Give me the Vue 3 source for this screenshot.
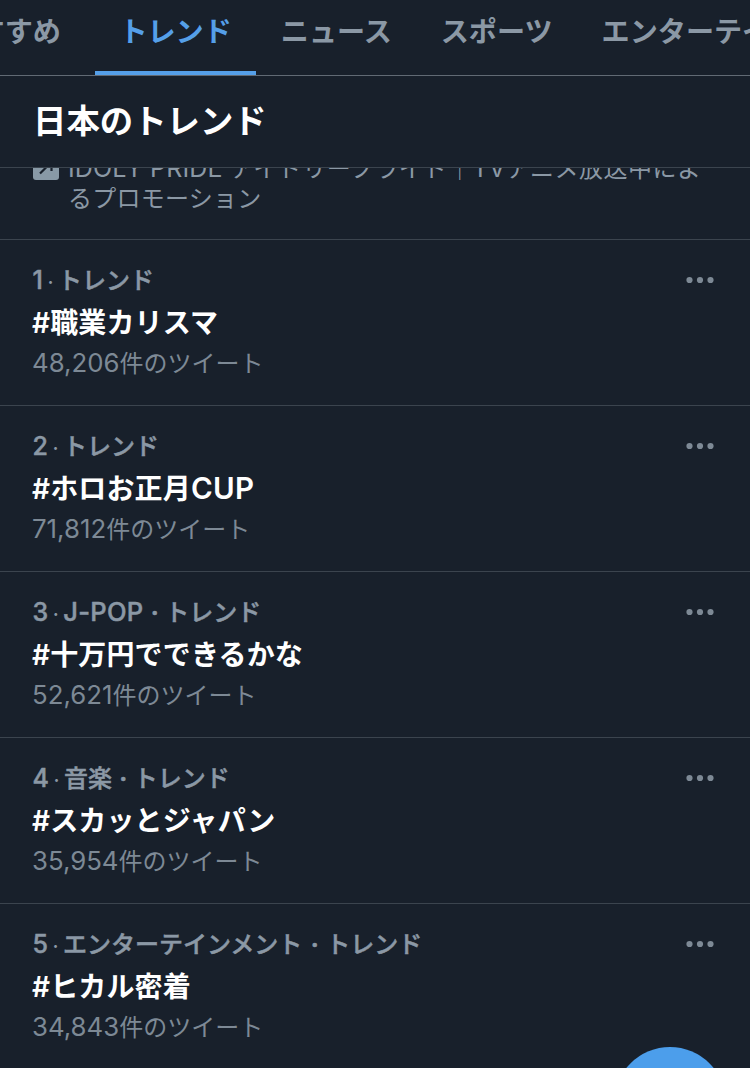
<script setup>
const tabs = [
  { label: 'おすすめ', active: false },
  { label: 'トレンド', active: true },
  { label: 'ニュース', active: false },
  { label: 'スポーツ', active: false },
  { label: 'エンターテインメント', active: false },
]

const trends = [
  { rank: 1, category: '', topic: '#職業カリスマ', count: '48,206' },
  { rank: 2, category: '', topic: '#ホロお正月', latin: 'CUP', count: '71,812' },
  { rank: 3, category: 'J-POP', wide: true, topic: '#十万円でできるかな', count: '52,621' },
  { rank: 4, category: '音楽', topic: '#スカッとジャパン', count: '35,954' },
  { rank: 5, category: 'エンターテインメント', topic: '#ヒカル密着', count: '34,843' },
]
</script>

<template>
  <main class="screen">
    <nav class="tabs">
      <a v-for="tab in tabs" :key="tab.label" class="tab" :class="{ active: tab.active }">{{ tab.label }}</a>
    </nav>
    <h1 class="title">日本のトレンド</h1>
    <section class="promo">
      <svg class="promo-icon" viewBox="0 0 26 26">
        <rect width="26" height="26" rx="3" fill="#8899a6" />
        <path d="M7 19.5 17.8 8.7M9.5 8h9v9" fill="none" stroke="#18202b" stroke-width="2.2" />
      </svg>
      <p class="promo-text">
        <span class="promo-line first"><span class="latin">IDOLY PRIDE</span> アイドリープライド｜<span class="latin">TV</span>アニメ放送中によ</span>
        <span class="promo-line second">るプロモーション</span>
      </p>
    </section>
    <article v-for="t in trends" :key="t.rank" class="trend">
      <div class="body">
        <div class="meta">
          <span class="rank">{{ t.rank }}</span><span class="dot">·</span><template v-if="t.category"><span :class="{ wide: t.wide }">{{ t.category }}</span><span class="sep">·</span></template><span>トレンド</span>
        </div>
        <div class="topic">{{ t.topic }}<span v-if="t.latin" class="topic-latin">{{ t.latin }}</span></div>
        <div class="count"><span class="number">{{ t.count }}</span>件のツイート</div>
      </div>
      <svg class="more" viewBox="0 0 30 8">
        <circle cx="4.5" cy="4" r="3.1" /><circle cx="15" cy="4" r="3.1" /><circle cx="25.5" cy="4" r="3.1" />
      </svg>
    </article>
    <div class="compose"></div>
  </main>
</template>

<style>
body { background: #18202b; }
</style>

<style scoped>
.screen {
  position: relative;
  width: 750px;
  height: 1068px;
  overflow: hidden;
  background: #18202b;
  color: #8b98a5;
  font-family: Inter, "Noto Sans CJK JP", sans-serif;
  font-size: 24px;
  white-space: nowrap;
}
.tabs {
  display: flex;
  height: 75px;
  margin-left: -76px;
  border-bottom: 1px solid #616a74;
}
.tab {
  flex: none;
  box-sizing: border-box;
  height: 75px;
  padding: 0 24.5px;
  border-bottom: 4px solid transparent;
  font-size: 28.1px;
  font-weight: 700;
  line-height: 64px;
}
.tab:first-child { padding-right: 34px; }
.tab.active {
  color: #559fe8;
  border-bottom-color: #559fe8;
}
.title {
  margin: 0;
  height: 91px;
  padding-left: 33px;
  border-bottom: 1px solid #3b444e;
  color: #fff;
  font-size: 33.4px;
  font-weight: 700;
  line-height: 91px;
}
.promo {
  display: flex;
  height: 71px;
  padding-left: 33px;
  border-bottom: 1px solid #3b444e;
  overflow: hidden;
}
.promo-icon {
  flex: none;
  width: 26px;
  height: 26px;
  margin: -14px 9px 0 0;
}
.promo-text {
  margin: -14px 0 0;
  line-height: 30px;
}
.promo-line { display: block; }
.promo-line.first { letter-spacing: 0.5px; }
.promo-line.second { letter-spacing: 0.25px; }
.latin { font-size: 25px; line-height: 1; letter-spacing: 0.15px; }
.trend {
  display: flex;
  justify-content: space-between;
  box-sizing: border-box;
  height: 166px;
  padding: 22px 35px 0 32px;
  border-bottom: 1px solid #3b444e;
}
.trend:last-of-type { border: 0; }
.meta {
  height: 37px;
  font-weight: 500;
  line-height: 37px;
  -webkit-text-stroke: 0.5px currentColor;
}
.rank { margin-left: 0.5px; font-size: 25px; }
.dot {
  margin: 0 4.5px;
  font-size: 20px;
  -webkit-text-stroke: 0;
}
.sep { margin: 0 6.5px 0 7.2px; font-weight: 700; }
.wide { font-size: 25.5px; line-height: 1; letter-spacing: 0.3px; }
.trend:last-of-type .sep { margin: 0 7.5px 0 8.5px; }
.topic {
  height: 48px;
  color: #fff;
  font-size: 28px;
  font-weight: 600;
  line-height: 48px;
  letter-spacing: 0.15px;
}
.topic-latin { font-size: 29.5px; line-height: 1; letter-spacing: 0.3px; }
.count {
  height: 32px;
  color: #7d8995;
  line-height: 32px;
}
.number { font-size: 25.8px; }
.more {
  width: 30px;
  height: 8px;
  margin-top: 14px;
  fill: #7d8995;
}
.compose {
  position: absolute;
  left: 614px;
  top: 1047px;
  width: 112px;
  height: 112px;
  border-radius: 50%;
  background: #4c9eeb;
}
</style>
